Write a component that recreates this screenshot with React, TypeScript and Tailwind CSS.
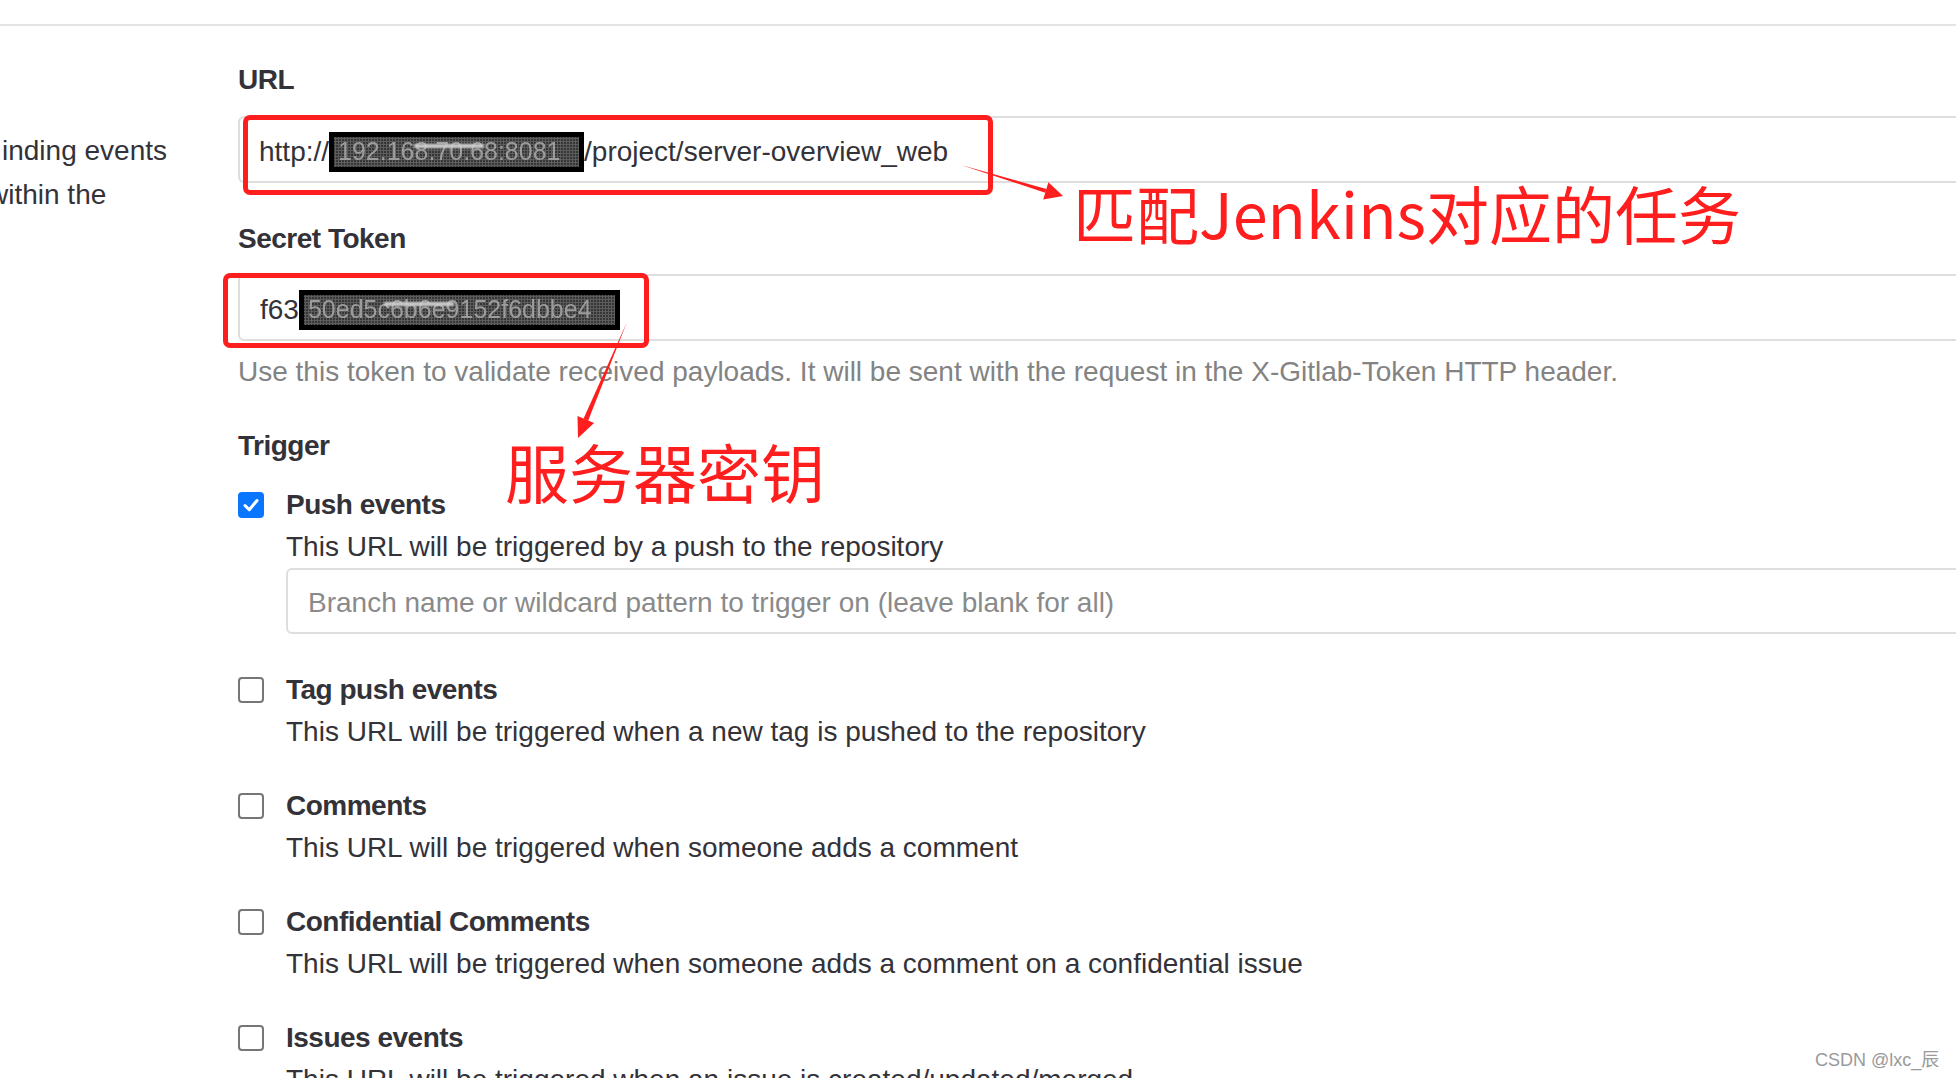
import React from "react";

function Redacted({ text, width, size }: { text: string; width: number; size: number }) {
  return (
    <span
      className="inline-flex h-[40px] items-center overflow-hidden border-[5px] border-black bg-[#262626] align-middle"
      style={{ width }}
    >
      <span className="relative flex h-full w-full items-center overflow-hidden bg-[radial-gradient(circle,#5c5c5c_1px,transparent_1.6px)] bg-[length:3px_3px]">
        <span
          className="whitespace-nowrap pl-[4px] text-[#9c9c9c] blur-[0.7px]"
          style={{ fontSize: size }}
        >
          {text}
        </span>
        <span className="absolute left-[80px] top-[7px] h-[4px] w-[70px] bg-[#cfcfcf] blur-[1px]" />
      </span>
    </span>
  );
}

function Checkbox({ checked }: { checked?: boolean }) {
  if (checked) {
    return (
      <div className="flex h-[26px] w-[26px] items-center justify-center rounded-[4px] bg-[#0a75ff]">
        <svg width="20" height="20" viewBox="0 0 20 20">
          <path d="M4 10.5 L8.3 14.8 L16 5.5" fill="none" stroke="white" strokeWidth="3" strokeLinecap="round" strokeLinejoin="round" />
        </svg>
      </div>
    );
  }
  return <div className="h-[26px] w-[26px] rounded-[4px] border-2 border-[#767676] bg-white" />;
}

function TriggerItem({
  title,
  desc,
  checked,
  className,
  children,
}: {
  title: string;
  desc: string;
  checked?: boolean;
  className?: string;
  children?: React.ReactNode;
}) {
  return (
    <div className={"flex " + (className ?? "")}>
      <div className="flex h-[40px] w-[48px] shrink-0 items-center">
        <Checkbox checked={checked} />
      </div>
      <div className="flex flex-1 flex-col">
        <div className="h-[40px] text-[28px] font-bold leading-[40px] tracking-[-0.5px] text-[#333238]">{title}</div>
        <div className="mt-[2px] h-[40px] text-[28px] leading-[40px] text-[#333238]">{desc}</div>
        {children}
      </div>
    </div>
  );
}

export default function App() {
  return (
    <div className="relative h-[1078px] w-[1956px] overflow-hidden bg-white font-['Liberation_Sans',Arial,sans-serif]">
      <div className="h-[26px] border-b-2 border-[#e4e4e4]" />
      <div className="flex">
        <div className="w-[238px] shrink-0 overflow-hidden">
          <div className="mt-[103px] whitespace-nowrap text-[28px] leading-[44px] text-[#333238]">
            <div className="ml-[2px]">inding events</div>
            <div className="ml-[-12px]">within the</div>
          </div>
        </div>
        <div className="w-[1760px] shrink-0">
          <div className="mt-[34px] h-[40px] text-[28px] font-bold leading-[40px] tracking-[-0.5px] text-[#333238]">URL</div>
          <div className="mt-[16px] flex h-[67px] items-center rounded-[6px] border-2 border-[#dedede] pl-[19px] pt-[5px] text-[28px] text-[#333238]">
            <span>http://</span>
            <Redacted text="192.168.70.68:8081" width={255} size={25} />
            <span>/project/server-overview_web</span>
          </div>
          <div className="mt-[36px] h-[40px] text-[28px] font-bold leading-[40px] tracking-[-0.5px] text-[#333238]">Secret Token</div>
          <div className="mt-[15px] flex h-[67px] items-center rounded-[6px] border-2 border-[#dedede] pl-[20px] pt-[4px] text-[28px] text-[#333238]">
            <span>f63</span>
            <Redacted text="50ed5c6b6e9152f6dbbe4" width={321} size={25} />
          </div>
          <div className="mt-[11px] h-[40px] whitespace-nowrap text-[28px] leading-[40px] text-[#838383]">
            Use this token to validate received payloads. It will be sent with the request in the X-Gitlab-Token HTTP header.
          </div>
          <div className="mt-[34px] h-[40px] text-[28px] font-bold leading-[40px] tracking-[-0.5px] text-[#333238]">Trigger</div>

          <TriggerItem className="mt-[19px]" checked title="Push events" desc="This URL will be triggered by a push to the repository">
            <div className="mt-[1px] flex h-[66px] items-center rounded-[6px] border-2 border-[#dedede] pl-[20px] pt-[4px] text-[28px] text-[#8a8a8a]">
              Branch name or wildcard pattern to trigger on (leave blank for all)
            </div>
          </TriggerItem>
          <TriggerItem className="mt-[36px]" title="Tag push events" desc="This URL will be triggered when a new tag is pushed to the repository" />
          <TriggerItem className="mt-[34px]" title="Comments" desc="This URL will be triggered when someone adds a comment" />
          <TriggerItem className="mt-[34px]" title="Confidential Comments" desc="This URL will be triggered when someone adds a comment on a confidential issue" />
          <TriggerItem className="mt-[34px]" title="Issues events" desc="This URL will be triggered when an issue is created/updated/merged" />
        </div>
      </div>

      {/* annotation red boxes */}
      <div className="pointer-events-none absolute left-[243px] top-[115px] h-[80px] w-[750px] rounded-[7px] border-[5px] border-[#ff1e1e]" />
      <div className="pointer-events-none absolute left-[223px] top-[273px] h-[75px] w-[426px] rounded-[7px] border-[5px] border-[#ff1e1e]" />

      {/* annotation arrows */}
      <svg className="pointer-events-none absolute left-0 top-0" width="1956" height="1078" viewBox="0 0 1956 1078">
        <polygon points="961,165 1046.4,188.9 1045.2,192.7" fill="#ff1e1e" />
        <polygon points="1063,196 1048.4,182.2 1043.2,199.4" fill="#ff1e1e" />
        <polygon points="627,322 588.0,421.0 583.6,418.6" fill="#ff1e1e" />
        <polygon points="578,438 594.1,423.1 577.5,416.1" fill="#ff1e1e" />
      </svg>

      {/* annotation texts */}
      <div className="pointer-events-none absolute left-[1073px] top-[180px] whitespace-nowrap font-['Noto_Sans_CJK_SC',sans-serif] text-[63px] leading-[64px] text-[#ff1e1e]">
        匹配Jenkins对应的任务
      </div>
      <div className="pointer-events-none absolute left-[505px] top-[438px] whitespace-nowrap font-['Noto_Sans_CJK_SC',sans-serif] text-[64px] leading-[64px] text-[#ff1e1e]">
        服务器密钥
      </div>

      {/* watermark */}
      <div className="pointer-events-none absolute left-[1815px] top-[1048px] whitespace-nowrap font-['Liberation_Sans','Noto_Sans_CJK_SC',sans-serif] text-[18px] leading-[24px] text-[#9a9a9a] [text-shadow:0_0_1px_#ffffff]">
        CSDN @lxc_辰
      </div>
    </div>
  );
}
